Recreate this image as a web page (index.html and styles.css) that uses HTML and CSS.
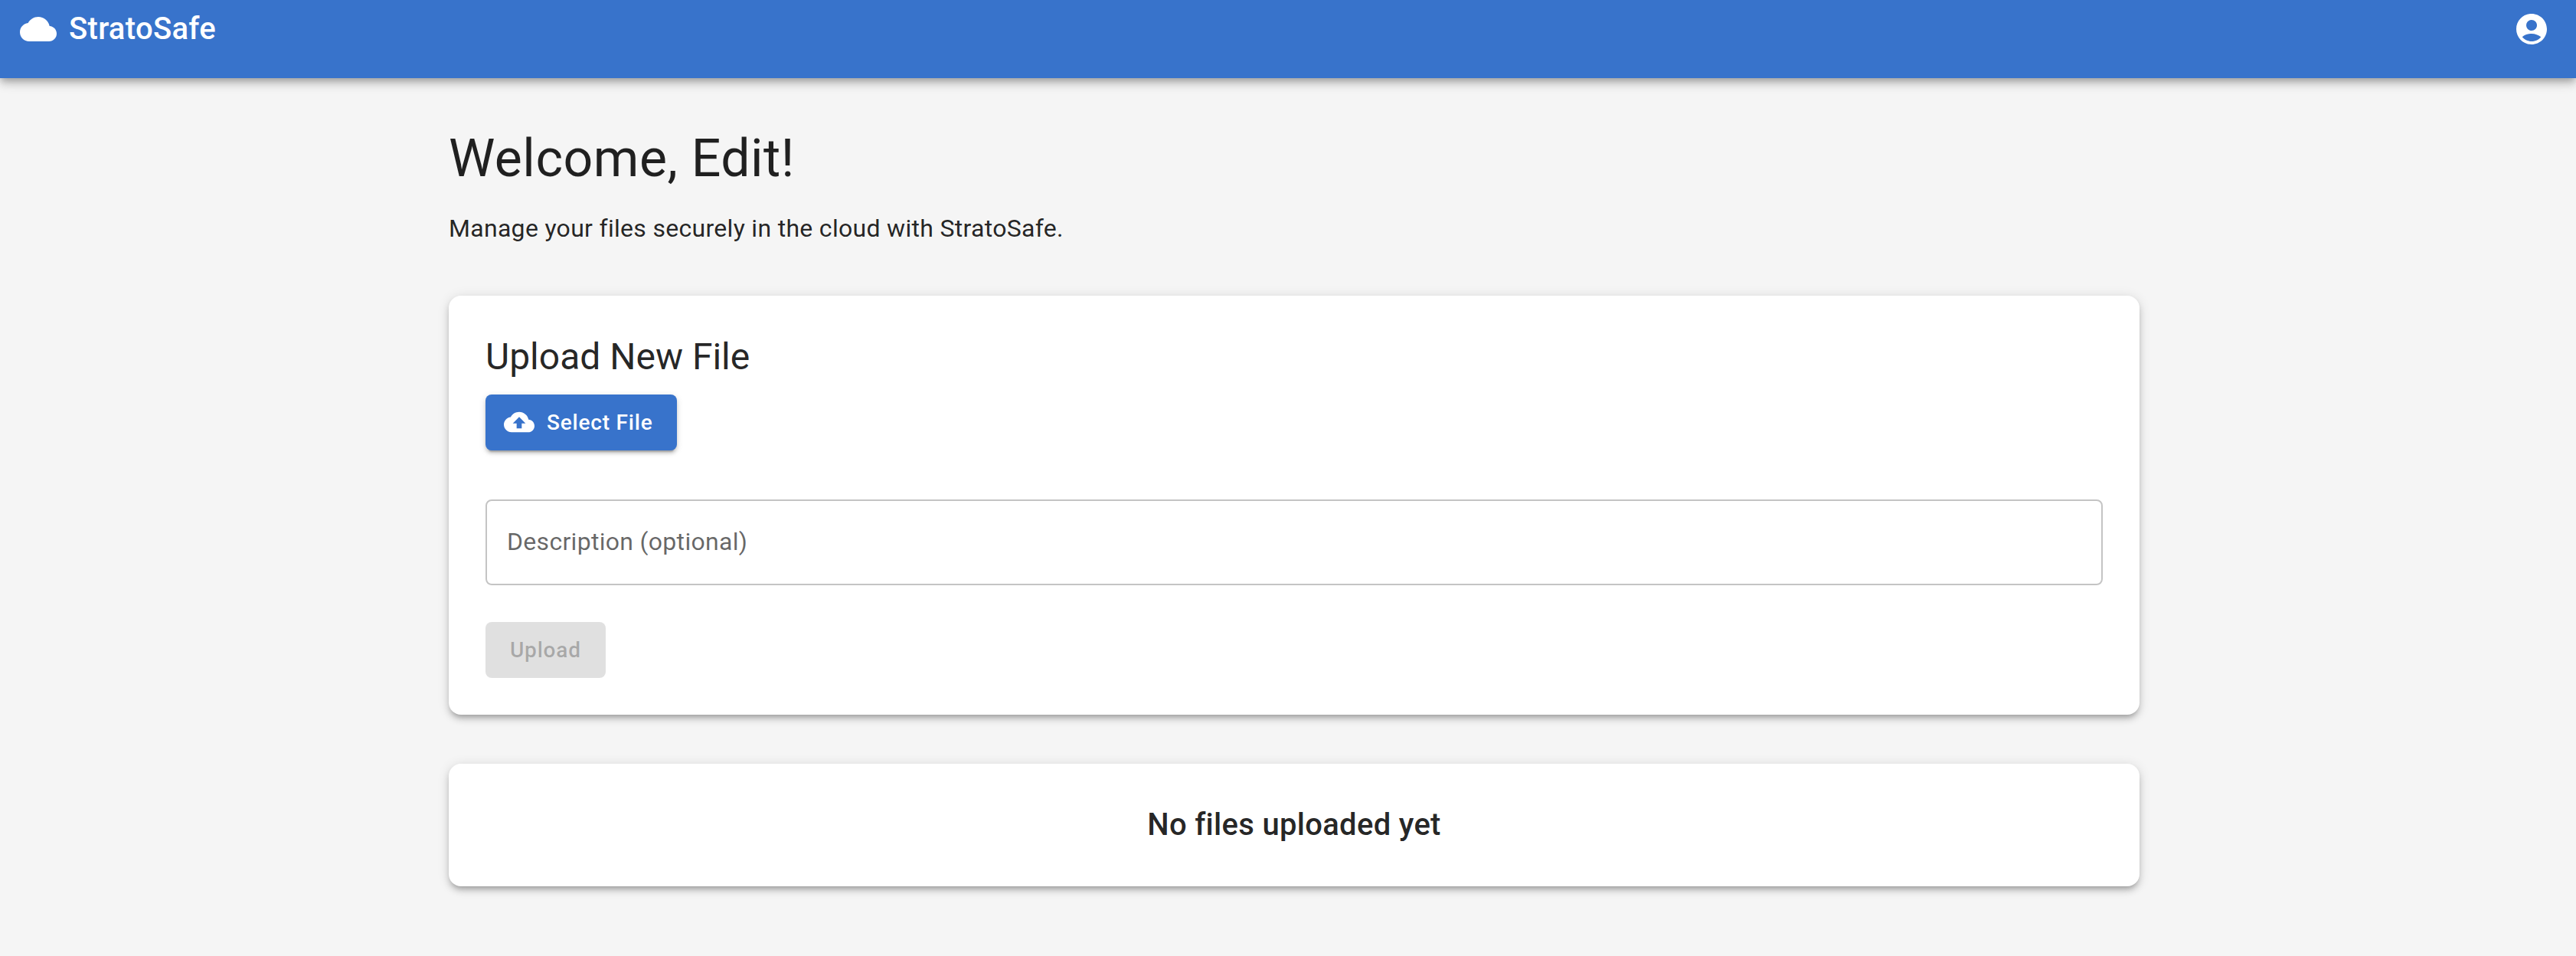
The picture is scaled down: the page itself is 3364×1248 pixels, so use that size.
FILE: index.html
```html
<!DOCTYPE html>
<html lang="en">
<head>
<meta charset="utf-8">
<title>StratoSafe</title>
<link rel="stylesheet" href="styles.css">
</head>
<body>
<header class="app-bar">
  <svg class="icon" viewBox="0 0 24 24" aria-hidden="true"><path d="M19.35 10.04C18.67 6.59 15.64 4 12 4 9.11 4 6.6 5.64 5.35 8.04 2.34 8.36 0 10.91 0 14c0 3.31 2.69 6 6 6h13c2.76 0 5-2.24 5-5 0-2.64-2.05-4.78-4.65-4.96z"/></svg>
  <div class="brand">StratoSafe</div>
  <svg class="icon" viewBox="0 0 24 24" role="img" aria-label="Account"><path d="M12 2C6.48 2 2 6.48 2 12s4.48 10 10 10 10-4.48 10-10S17.52 2 12 2zm0 4c1.93 0 3.5 1.57 3.5 3.5S13.93 13 12 13s-3.5-1.57-3.5-3.5S10.07 6 12 6zm0 14c-2.03 0-4.43-.82-6.14-2.88C7.55 15.8 9.68 15 12 15s4.45.8 6.14 2.12C16.43 19.18 14.03 20 12 20z"/></svg>
</header>
<main class="container">
  <h1 class="welcome">Welcome, Edit!</h1>
  <p class="intro">Manage your files securely in the cloud with StratoSafe.</p>
  <section class="card">
    <h2 class="card-title">Upload New File</h2>
    <button class="button button-primary" type="button">
      <svg class="button-icon" viewBox="0 0 24 24" aria-hidden="true"><path d="M19.35 10.04C18.67 6.59 15.64 4 12 4 9.11 4 6.6 5.64 5.35 8.04 2.34 8.36 0 10.91 0 14c0 3.31 2.69 6 6 6h13c2.76 0 5-2.24 5-5 0-2.64-2.05-4.78-4.65-4.96zM14 13v4h-4v-4H7l5-5 5 5h-3z"/></svg>
      Select File
    </button>
    <label class="field">Description (optional)</label>
    <button class="button" type="button" disabled>Upload</button>
  </section>
  <section class="card">
    <h3 class="empty">No files uploaded yet</h3>
  </section>
</main>
</body>
</html>
```
FILE: styles.css
```css
* {
  box-sizing: border-box;
}

body {
  margin: 0;
  min-height: 100vh;
  background: #f5f5f5;
  color: rgba(0, 0, 0, 0.87);
  font-family: Roboto, "Liberation Sans", sans-serif;
  -webkit-font-smoothing: antialiased;
}

h1, h2, h3, p {
  margin: 0;
}

.app-bar {
  display: flex;
  align-items: center;
  gap: 16px;
  height: 102px;
  padding: 0 34px 26px 26px;
  background: #3873cb;
  color: #fff;
  box-shadow: 0 4px 8px -2px rgba(0, 0, 0, 0.2), 0 8px 10px rgba(0, 0, 0, 0.14), 0 2px 20px rgba(0, 0, 0, 0.12);
}

.icon {
  width: 48px;
  height: 48px;
  fill: currentColor;
}

.brand {
  flex: 1;
  font-size: 40px;
  font-weight: 500;
  line-height: 1.6;
  letter-spacing: 0.0075em;
}

.container {
  width: 2208px;
  margin-left: 586px;
  padding-top: 64px;
}

.welcome {
  margin-bottom: 0.35em;
  font-size: 68px;
  font-weight: 400;
  line-height: 1.235;
  letter-spacing: 0.00735em;
}

.intro {
  font-size: 32px;
  line-height: 1.5;
  letter-spacing: 0.00938em;
}

.card {
  display: flex;
  flex-direction: column;
  align-items: flex-start;
  margin-top: 64px;
  padding: 48px;
  border-radius: 16px;
  background: #fff;
  box-shadow: 0 6px 6px -4px rgba(0, 0, 0, 0.2), 0 6px 8px rgba(0, 0, 0, 0.14), 0 2px 16px rgba(0, 0, 0, 0.12);
}

.card-title {
  margin-bottom: 0.35em;
  font-size: 48px;
  font-weight: 400;
  line-height: 1.334;
}

.button {
  display: inline-flex;
  align-items: center;
  padding: 12px 32px;
  border: 0;
  border-radius: 8px;
  font: 500 28px/1.75 Roboto, "Liberation Sans", sans-serif;
  letter-spacing: 0.02857em;
}

.button:disabled {
  background: rgba(0, 0, 0, 0.12);
  color: rgba(0, 0, 0, 0.26);
}

.button-primary {
  background: #3873cb;
  color: #fff;
  box-shadow: 0 6px 2px -4px rgba(0, 0, 0, 0.2), 0 4px 4px rgba(0, 0, 0, 0.14), 0 2px 10px rgba(0, 0, 0, 0.12);
}

.button-icon {
  width: 40px;
  height: 40px;
  margin: 0 16px 0 -8px;
  fill: currentColor;
}

.field {
  align-self: stretch;
  margin: 64px 0 48px;
  padding: 30px 26px 32px;
  border: 2px solid rgba(0, 0, 0, 0.23);
  border-radius: 8px;
  color: rgba(0, 0, 0, 0.6);
  font-size: 32px;
  line-height: 46px;
  letter-spacing: 0.00938em;
}

.empty {
  align-self: center;
  font-size: 40px;
  font-weight: 500;
  line-height: 1.6;
  letter-spacing: 0.0075em;
}
```
